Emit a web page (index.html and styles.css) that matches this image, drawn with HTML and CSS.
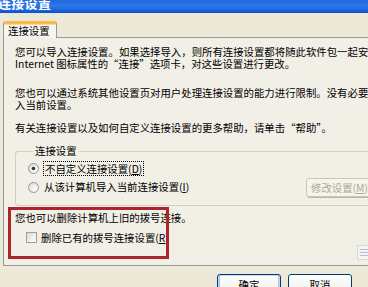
FILE: index.html
```html
<!DOCTYPE html>
<html lang="zh-Hans">
<head>
<meta charset="utf-8">
<link rel="stylesheet" href="styles.css">
</head>
<body>
<div class="window">
  <div class="titlebar"><span class="title">连接设置</span></div>
  <div class="tabs"><div class="tab">连接设置</div></div>
  <div class="panel">
    <div class="para p1">您可以导入连接设置。如果选择导入，则所有连接设置都将随此软件包一起安装。用户可以使用<br>Internet 图标属性的“连接”选项卡，对这些设置进行更改。</div>
    <div class="para p2">您也可以通过系统其他设置页对用户处理连接设置的能力进行限制。没有必要导<br>入当前设置。</div>
    <div class="para p3">有关连接设置以及如何自定义连接设置的更多帮助，请单击“帮助”。</div>
    <fieldset class="group">
      <legend class="legend">连接设置</legend>
      <div class="row row1">
        <svg class="radio" width="11" height="11" viewBox="0 0 11 11"><defs><radialGradient id="rg" cx="0.7" cy="0.7" r="0.8"><stop offset="0" stop-color="#ffffff"/><stop offset="1" stop-color="#dcdcd4"/></radialGradient></defs><circle cx="5.5" cy="5.5" r="5" fill="url(#rg)" stroke="#8b97a3"/><circle cx="5.5" cy="5.5" r="1.8" fill="#2c3a2c"/></svg>
        <span class="lbl focus">不自定义连接设置(<u>D</u>)</span>
      </div>
      <div class="row row2">
        <svg class="radio" width="11" height="11" viewBox="0 0 11 11"><circle cx="5.5" cy="5.5" r="5" fill="url(#rg)" stroke="#8b97a3"/></svg>
        <span class="lbl">从该计算机导入当前连接设置(<u>I</u>)</span>
        <span class="btn disabled">修改设置(<u>M</u>)...</span>
      </div>
    </fieldset>
    <div class="para p4">您也可以删除计算机上旧的拨号连接。</div>
    <div class="row check-row">
      <span class="check"></span>
      <span class="lbl">删除已有的拨号连接设置(<u>R</u>)</span>
    </div>
  </div>
  <div class="buttons">
    <span class="btn default">确定</span>
    <span class="btn">取消</span>
  </div>
  <div class="redbox"></div>
  <div class="mark"><span></span><span></span><span></span></div>
</div>
</body>
</html>
```
FILE: styles.css
```css
* { box-sizing: border-box; }
html, body { margin: 0; padding: 0; background: #ece9d8; }
.window {
  position: relative;
  width: 368px;
  height: 287px;
  overflow: hidden;
  background: #ece9d8;
  font-family: "Noto Sans CJK SC", "Noto Sans", sans-serif;
  font-size: 10.4px;
  color: #000;
}
.titlebar {
  height: 13px;
  overflow: hidden;
  background: linear-gradient(#1f68de, #2d79ec 45%, #1a62dc 80%, #0d4fc4);
}
.title {
  display: block;
  margin-top: -5px;
  margin-left: -2px;
  color: #fff;
  font-weight: bold;
  font-size: 13px;
  line-height: 15px;
  letter-spacing: 0.3px;
}
.tabs {
  display: flex;
  margin-top: 8px;
  padding-left: 3px;
}
.tab {
  position: relative;
  z-index: 1;
  width: 54px;
  height: 17px;
  margin-bottom: -1px;
  padding-left: 4px;
  line-height: 14px;
  background: #f6f5ef;
  border: 1px solid #919b9c;
  border-bottom: none;
  border-top: 3px solid #f9b848;
  border-radius: 3px 3px 0 0;
  box-shadow: inset 0 1px 0 #ffd98a;
}
.panel {
  margin-left: 3px;
  width: 390px;
  height: 229px;
  padding: 8px 0 0 11px;
  border: 1px solid #919b9c;
  background: #f1efe6;
}
.para {
  white-space: nowrap;
  line-height: 12px;
}
.p2 { margin-top: 17px; }
.p3 { margin-top: 11px; }
.group {
  margin: 11px 0 0 0;
  width: 390px;
  padding: 3px 0 8px 12px;
  border: 1px solid #d0d0bf;
  border-radius: 3px;
}
.legend {
  margin-left: 5px;
  padding: 0 2px;
  line-height: 12px;
}
.row {
  display: flex;
  align-items: center;
  white-space: nowrap;
}
.row1 { height: 16px; }
.row2 { height: 20px; margin-top: 1px; }
.radio { flex: none; margin-right: 5px; }
.lbl { line-height: 12px; }
.focus {
  margin-left: -1px;
  padding: 1px 1px 0 1px;
  border: 1px dotted #000;
}
.btn {
  display: flex;
  align-items: center;
  justify-content: center;
  height: 21px;
  width: 64px;
  border: 1px solid #003c74;
  border-radius: 3px;
  background: linear-gradient(#ffffff, #f4f3ee 70%, #dedcd2);
  white-space: nowrap;
}
.btn.disabled {
  margin-left: auto;
  margin-right: 18px;
  width: 80px;
  height: 19px;
  color: #aca899;
  border-color: #c9c7ba;
  background: #f5f4ea;
  box-shadow: 1px 1px 0 #b8b6a8;
  justify-content: flex-start;
  padding-left: 4px;
}
.p4 { margin-top: 6px; }
.check-row { margin-top: 7px; height: 13px; padding-left: 11px; }
.check {
  flex: none;
  width: 11px;
  height: 11px;
  margin-right: 4px;
  border: 1px solid #9aa0a6;
  background: linear-gradient(135deg, #dcdcd4, #ffffff);
}
.buttons {
  display: flex;
  gap: 7px;
  margin-top: 8px;
  padding-left: 217px;
}
.btn.default { box-shadow: inset 0 0 0 1px #c6d7f5, inset 0 -1px 0 2px #a8c2ee; }
.redbox {
  position: absolute;
  left: 8px;
  top: 207px;
  width: 161px;
  height: 52px;
  border: 3px solid #a8262c;
}
.mark {
  position: absolute;
  left: 357px;
  top: 245px;
  width: 14px;
  height: 15px;
  border: 1px solid #d8d8d4;
  background: #f4f4f2;
  display: flex;
  flex-direction: column;
  gap: 2px;
  padding: 3px 2px;
}
.mark span { display: block; height: 1px; background: #b8c0cc; }
```
